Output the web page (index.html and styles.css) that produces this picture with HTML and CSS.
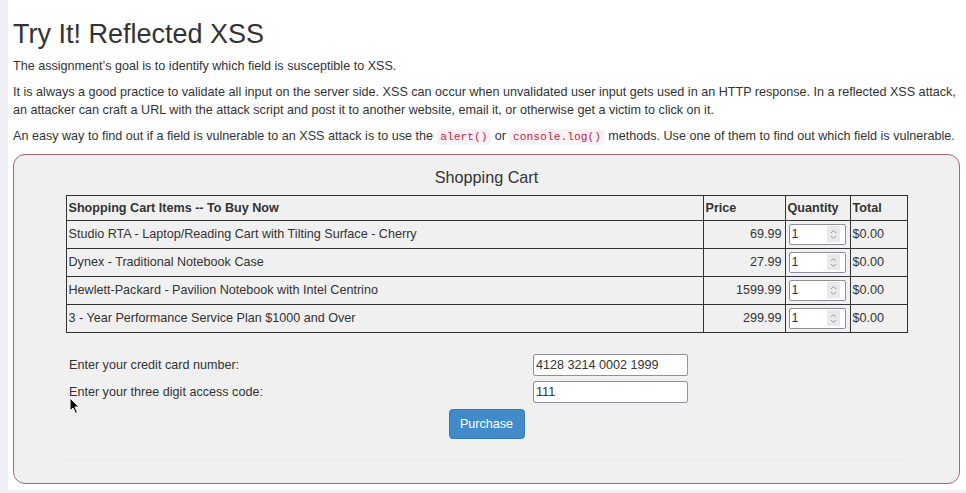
FILE: index.html
```html
<!DOCTYPE html>
<html lang="en">
<head>
<meta charset="utf-8">
<title>Try It! Reflected XSS</title>
<link rel="stylesheet" href="styles.css">
</head>
<body>
<div class="panel">
  <h2 class="title">Try It! Reflected XSS</h2>
  <p class="para">The assignment’s goal is to identify which field is susceptible to XSS.</p>
  <p class="para">It is always a good practice to validate all input on the server side. XSS can occur when unvalidated user input gets used in an HTTP response. In a reflected XSS attack, an attacker can craft a URL with the attack script and post it to another website, email it, or otherwise get a victim to click on it.</p>
  <p class="para">An easy way to find out if a field is vulnerable to an XSS attack is to use the <code class="code">alert()</code> or <code class="code">console.log()</code> methods. Use one of them to find out which field is vulnerable.</p>

  <div class="cart-box">
    <div class="cart-title">Shopping Cart</div>
    <table class="cart-table">
      <colgroup>
        <col class="c-item"><col class="c-price"><col class="c-qty"><col class="c-total">
      </colgroup>
      <thead>
        <tr><th>Shopping Cart Items -- To Buy Now</th><th>Price</th><th>Quantity</th><th>Total</th></tr>
      </thead>
      <tbody>
        <tr><td>Studio RTA - Laptop/Reading Cart with Tilting Surface - Cherry</td><td class="num">69.99</td><td class="qty"><div class="num-input"><span class="num-val">1</span><span class="spin"><svg width="7" height="11" viewBox="0 0 7 11"><path d="M1 4 L3.5 1.5 L6 4 M1 7 L3.5 9.5 L6 7" fill="none" stroke="#9a9aa6" stroke-width="1"/></svg></span></div></td><td>$0.00</td></tr>
        <tr><td>Dynex - Traditional Notebook Case</td><td class="num">27.99</td><td class="qty"><div class="num-input"><span class="num-val">1</span><span class="spin"><svg width="7" height="11" viewBox="0 0 7 11"><path d="M1 4 L3.5 1.5 L6 4 M1 7 L3.5 9.5 L6 7" fill="none" stroke="#9a9aa6" stroke-width="1"/></svg></span></div></td><td>$0.00</td></tr>
        <tr><td>Hewlett-Packard - Pavilion Notebook with Intel Centrino</td><td class="num">1599.99</td><td class="qty"><div class="num-input"><span class="num-val">1</span><span class="spin"><svg width="7" height="11" viewBox="0 0 7 11"><path d="M1 4 L3.5 1.5 L6 4 M1 7 L3.5 9.5 L6 7" fill="none" stroke="#9a9aa6" stroke-width="1"/></svg></span></div></td><td>$0.00</td></tr>
        <tr><td>3 - Year Performance Service Plan $1000 and Over</td><td class="num">299.99</td><td class="qty"><div class="num-input"><span class="num-val">1</span><span class="spin"><svg width="7" height="11" viewBox="0 0 7 11"><path d="M1 4 L3.5 1.5 L6 4 M1 7 L3.5 9.5 L6 7" fill="none" stroke="#9a9aa6" stroke-width="1"/></svg></span></div></td><td>$0.00</td></tr>
      </tbody>
    </table>

    <div class="pay-form">
      <label class="pay-label">Enter your credit card number:</label>
      <div class="text-input">4128 3214 0002 1999</div>
      <label class="pay-label">Enter your three digit access code:</label>
      <div class="text-input">111</div>
    </div>
    <div class="btn-row"><button class="btn-primary">Purchase</button></div>
    <div class="faint-rule"></div>

    <svg class="cursor" width="12" height="18" viewBox="0 0 12 18"><path d="M1 1 L1 14 L4 11 L6.5 16.5 L8.5 15.5 L6 10 L10 10 Z" fill="#111" stroke="#fff" stroke-width="1"/></svg>
  </div>
</div>
</body>
</html>
```

FILE: styles.css
```css
html, body {
  margin: 0;
  padding: 0;
}
body {
  background: #eef0f6;
  font-family: "Liberation Sans", Arial, sans-serif;
  color: #333;
  font-size: 12.6px;
  line-height: 18px;
}
.panel {
  margin-left: 8px;
  background: #fff;
  padding: 1px 6px 6px 5px;
}
.title {
  font-size: 27px;
  font-weight: 500;
  line-height: 29.7px;
  margin: 19px 0 7px;
  color: #333;
}
.para {
  margin: 0 0 8px;
}
.code {
  font-family: "Liberation Mono", "Courier New", monospace;
  font-size: 11.3px;
  padding: 2px 3.6px;
  background: #f9f2f4;
  color: #c7254e;
  border-radius: 4px;
}
.cart-box {
  position: relative;
  border: 1px solid #a66a6a;
  border-radius: 12px;
  background: #f0f0f0;
  padding: 13px 0 22px;
}
.cart-title {
  text-align: center;
  font-size: 16.2px;
  line-height: 18px;
  margin-bottom: 9px;
}
.cart-table {
  width: 841px;
  margin: 0 auto;
  border-collapse: collapse;
  table-layout: fixed;
}
.c-item { width: 637px; }
.c-price { width: 82px; }
.c-qty { width: 65px; }
.c-total { width: 57px; }
.cart-table th,
.cart-table td {
  border: 1px solid #333;
  padding: 3px 3px 3px 2px;
  text-align: left;
  vertical-align: middle;
  white-space: nowrap;
}
.cart-table th {
  font-weight: bold;
}
.cart-table td.num {
  text-align: right;
}
.cart-table td.qty {
  padding: 3px 2px 3px 3px;
}
.num-input {
  box-sizing: border-box;
  width: 57px;
  height: 21px;
  background: #fff;
  border: 1px solid #8f8f9d;
  border-radius: 2px;
  display: flex;
  align-items: center;
  justify-content: space-between;
  padding: 0 5px 0 2px;
}
.num-val {
  line-height: 18px;
}
.spin {
  width: 13px;
  height: 16px;
  background: #e9e9ed;
  display: flex;
  align-items: center;
  justify-content: center;
}
.pay-form {
  width: 841px;
  margin: 21px auto 0;
  display: grid;
  grid-template-columns: 467px 155px;
  row-gap: 5px;
  align-items: center;
}
.pay-label {
  padding-left: 3px;
}
.text-input {
  box-sizing: border-box;
  height: 22px;
  width: 155px;
  background: #fff;
  border: 1px solid #8f8f9d;
  border-radius: 2px;
  padding: 1px 2px;
  line-height: 18px;
}
.btn-row {
  display: flex;
  justify-content: center;
  margin-top: 6px;
}
.btn-primary {
  font-family: "Liberation Sans", Arial, sans-serif;
  font-size: 12.6px;
  line-height: 18px;
  color: #fff;
  background: #428bca;
  border: 1px solid #357ebd;
  border-radius: 3.6px;
  padding: 5px 10px;
  height: 30px;
  width: 76px;
}
.faint-rule {
  width: 843px;
  margin: 21px auto 0;
  border-top: 1px solid #e8e8e8;
}
.cursor {
  position: absolute;
  left: 55px;
  top: 242px;
}
```
